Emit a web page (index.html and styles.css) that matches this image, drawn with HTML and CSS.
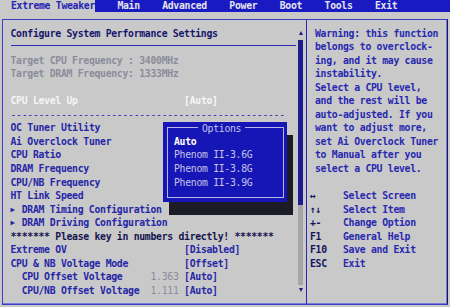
FILE: index.html
```html
<!DOCTYPE html>
<html>
<head lang="en">
    <meta charset="UTF-8">
    <title>BIOS Setup - Extreme Tweaker</title>

    <link rel="stylesheet" href="styles.css">
</head>
<body>
<!-- top menu -->
<div class="menubar">
    <span class="tab active">Extreme Tweaker</span>
    <span class="tab">Main</span>
    <span class="tab">Advanced</span>
    <span class="tab">Power</span>
    <span class="tab">Boot</span>
    <span class="tab">Tools</span>
    <span class="tab">Exit</span>
</div>

<div class="frame">
    <!-- left: settings list -->
    <div class="left">
        <div class="content">
            <div class="title">Configure System Performance Settings</div>
            <div class="row dim">Target CPU Frequency : 3400MHz</div>
            <div class="row dim">Target DRAM Frequency: 1333MHz</div>
            <div class="row"></div>
            <div class="row sel"><span class="label">CPU Level Up</span><span>[Auto]</span></div>
            <div class="row dash">-------------------------------------------------</div>
            <div class="row">OC Tuner Utility</div>
            <div class="row">Ai Overclock Tuner</div>
            <div class="row">CPU Ratio</div>
            <div class="row">DRAM Frequency</div>
            <div class="row">CPU/NB Frequency</div>
            <div class="row">HT Link Speed</div>
            <div class="row"><span class="tri">&#9654;</span>DRAM Timing Configuration</div>
            <div class="row"><span class="tri">&#9654;</span>DRAM Driving Configuration</div>
            <div class="row note">******* Please key in numbers directly! *******</div>
            <div class="row"><span class="label">Extreme OV</span><span>[Disabled]</span></div>
            <div class="row"><span class="label">CPU &amp; NB Voltage Mode</span><span>[Offset]</span></div>
            <div class="row"><span class="label sub">CPU Offset Voltage<span class="num">1.363</span></span><span>[Auto]</span></div>
            <div class="row"><span class="label sub">CPU/NB Offset Voltage<span class="num">1.111</span></span><span>[Auto]</span></div>
        </div>
        <div class="scrollbar">
            <i class="arrow up"></i>
            <i class="thumb"></i>
            <i class="track"></i>
            <i class="arrow down"></i>
        </div>
    </div>

    <!-- right: help -->
    <div class="help">
        <div class="help-text">
            Warning: this function<br>
            belongs to overclock-<br>
            ing, and it may cause<br>
            instability.<br>
            Select a CPU level,<br>
            and the rest will be<br>
            auto-adjusted. If you<br>
            want to adjust more,<br>
            set Ai Overclock Tuner<br>
            to Manual after you<br>
            select a CPU level.
        </div>
        <div class="keys">
            <div class="key"><b>&#8596;</b>Select Screen</div>
            <div class="key"><b>&#8593;&#8595;</b>Select Item</div>
            <div class="key"><b>+-</b>Change Option</div>
            <div class="key"><b>F1</b>General Help</div>
            <div class="key"><b>F10</b>Save and Exit</div>
            <div class="key"><b>ESC</b>Exit</div>
        </div>
    </div>

    <!-- options popup -->
    <div class="popup">
        <span class="popup-title">Options</span>
        <div class="opt current">Auto</div>
        <div class="opt">Phenom II-3.6G</div>
        <div class="opt">Phenom II-3.8G</div>
        <div class="opt">Phenom II-3.9G</div>
    </div>
</div>
</body>
</html>
```

FILE: styles.css
```css
/* one text cell = 5.6px wide, 13.55px tall */
body {
    margin: 0;
    background: #c9c9c9;
    font-family: "DejaVu Sans Mono", monospace;
    font-size: 9.8px;
    letter-spacing: -0.3px;
    font-weight: bold;
    color: #2626a6;
}

/* top menu */
.menubar {
    display: flex;
    gap: 22.4px;
    height: 12px;
    line-height: 12px;
    background: #1a1ac2;
    color: #e4e4ec;
}
.tab.active {
    padding-left: 11px;
    background: #cacaca;
    color: #2424b4;
}

/* main frame */
.frame {
    position: relative;
    display: flex;
    box-sizing: border-box;
    width: 446px;
    height: 286px;
    margin: 7px 0 0 2px;
    border: 1px solid #3c3cc6;
    border-right-color: #16165e;
    box-shadow: inset -1px -1px 0 #7a7ad8;
}

.left {
    display: flex;
    box-sizing: border-box;
    width: 304px;
    padding: 6.5px 0 0 7.5px;
    border-right: 1px solid #2a2ab0;
}
.content {
    width: 285.5px;
}
.title {
    line-height: 13.55px;
    padding-bottom: 4.9px;
    margin-bottom: 7.65px;
    border-bottom: 1px solid #2a2ab0;
    color: #16166a;
}
.row {
    display: flex;
    height: 13.55px;
    line-height: 13.55px;
    white-space: pre;
}
.row .label {
    display: flex;
    justify-content: space-between;
    width: 168px;
    margin-right: 5.6px;
}
.row .label.sub {
    box-sizing: border-box;
    padding-left: 11.2px;
}
.num { color: #8c8c9c; font-weight: normal; }
.dim { color: #8c8c9c; }
.sel { color: #f6f6f6; }
.note { color: #14144e; }
.dash { color: #2a2ab0; font-weight: normal; }
.tri {
    width: 11.2px;
    font-size: 7.5px;
}

/* scrollbar */
.scrollbar {
    display: flex;
    flex-direction: column;
    align-items: center;
    width: 5px;
    margin-left: 2px;
    padding: 4px 0 12px;
    box-sizing: border-box;
}
.arrow {
    width: 0;
    height: 0;
    border-left: 2.5px solid transparent;
    border-right: 2.5px solid transparent;
}
.arrow.up { border-bottom: 4px solid #1c1c8c; }
.arrow.down { border-top: 4px solid #1c1c8c; margin-top: 3px; }
.thumb {
    width: 5px;
    height: 165px;
    margin-top: 5.5px;
    background: #1c1c8c;
}
.track {
    flex: 1;
    width: 5px;
    background: #a6a6a6;
}

/* help panel */
.help {
    padding: 6.5px 0 0 8px;
    line-height: 13.55px;
    color: #2828b0;
}
.keys {
    margin: 13.55px 0 0 -5px;
}
.key {
    display: flex;
}
.key b {
    width: 33px;
    color: #14145e;
}

/* popup */
.popup {
    position: absolute;
    left: 160.3px;
    top: 101.7px;
    width: 124px;
    height: 80px;
    box-sizing: border-box;
    padding: 13.2px 0 0 10.7px;
    background: #1616b6;
    box-shadow: 6px 13px 0 #1c1c26;
    line-height: 13.55px;
    color: #c4c4e8;
    font-weight: normal;
}
.popup:before {
    content: "";
    position: absolute;
    top: 5px;
    left: 3.3px;
    right: 3.3px;
    bottom: 3.6px;
    border: 1px solid #b8b8e6;
}
.popup-title {
    position: absolute;
    top: 0;
    left: 34.7px;
    padding: 0 4px;
    background: #1616b6;
}
.opt.current {
    color: #ffffff;
    font-weight: bold;
}
```
